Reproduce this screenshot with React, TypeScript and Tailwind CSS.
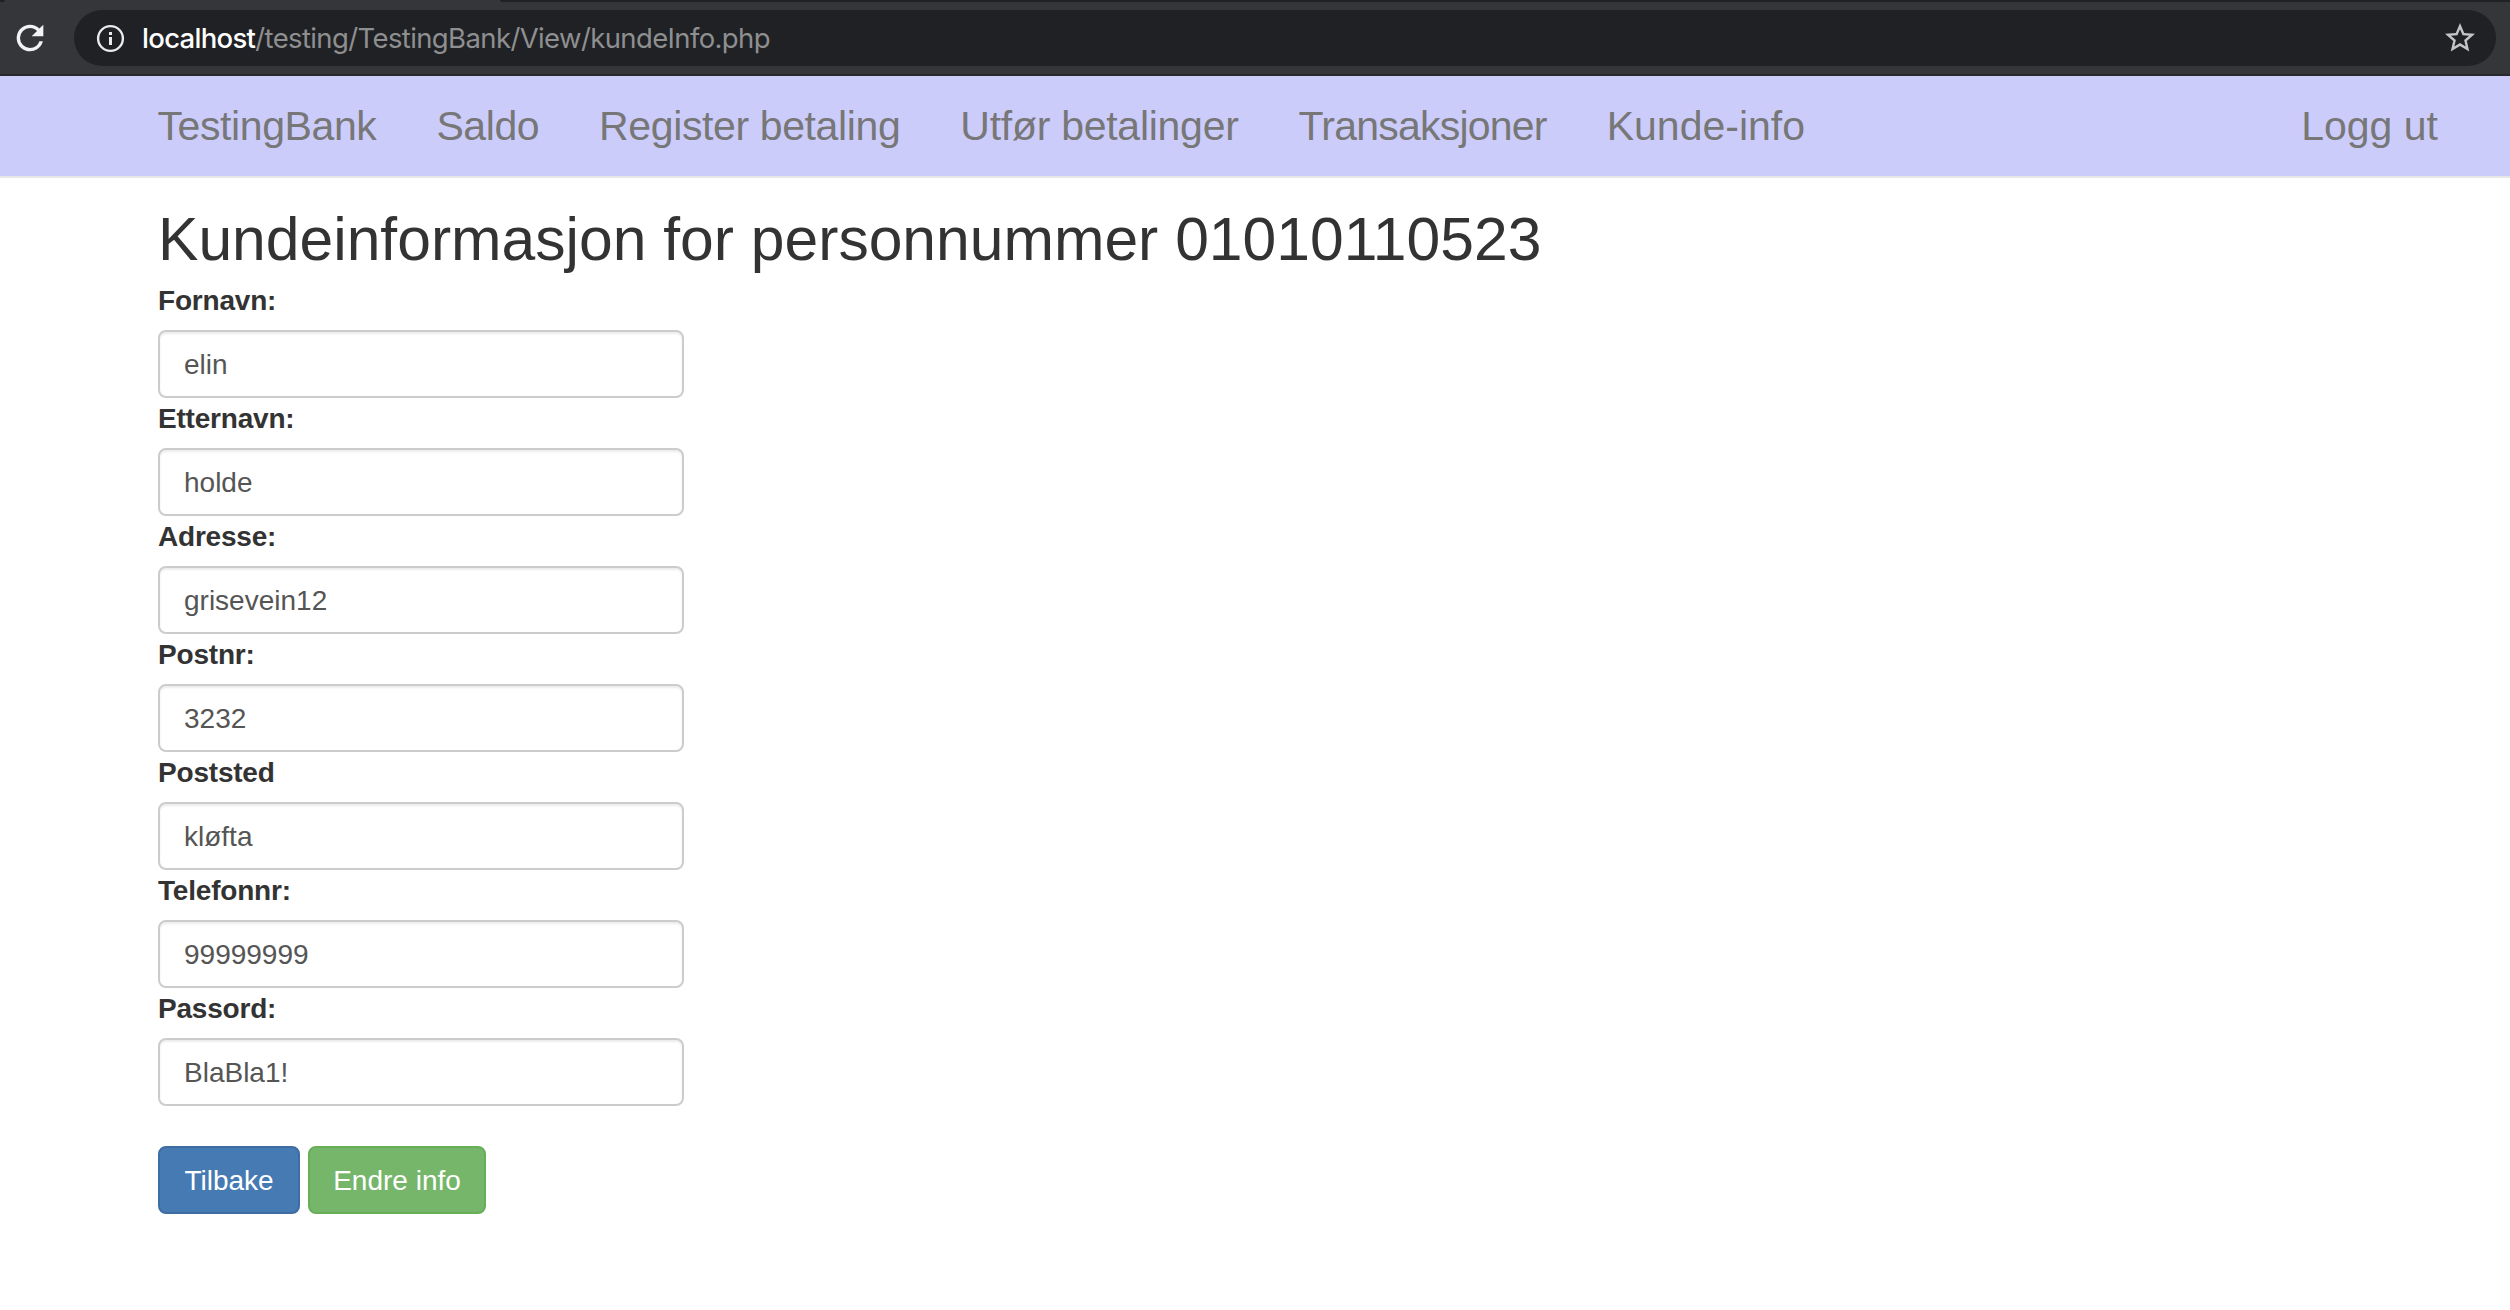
const links = [
  { text: "TestingBank", tracking: "tracking-[-0.4px]" },
  { text: "Saldo", tracking: "tracking-[-0.45px]" },
  { text: "Register betaling", tracking: "tracking-[-0.38px]" },
  { text: "Utfør betalinger", tracking: "tracking-[-0.27px]" },
  { text: "Transaksjoner", tracking: "tracking-[-0.78px]" },
  { text: "Kunde-info", tracking: "tracking-normal" },
];

const fields = [
  { label: "Fornavn:", value: "elin" },
  { label: "Etternavn:", value: "holde" },
  { label: "Adresse:", value: "grisevein12" },
  { label: "Postnr:", value: "3232" },
  { label: "Poststed", value: "kløfta" },
  { label: "Telefonnr:", value: "99999999" },
  { label: "Passord:", value: "BlaBla1!" },
];

function ReloadIcon() {
  return (
    <svg className="h-10 w-10" viewBox="0 0 24 24" fill="#f1f3f4">
      <path d="M17.65 6.35A7.958 7.958 0 0 0 12 4a8 8 0 1 0 7.73 10h-2.08A5.99 5.99 0 0 1 12 18a6 6 0 1 1 0-12c1.66 0 3.14.69 4.22 1.78L13 11h7V4l-2.35 2.35z" />
    </svg>
  );
}

function InfoIcon() {
  return (
    <svg className="h-8 w-8" viewBox="0 0 32 32" fill="none">
      <circle cx="16.5" cy="16.5" r="12.4" stroke="#e8eaed" strokeWidth="2.4" />
      <path d="M15 10h3v3h-3zM15 15h3v8h-3z" fill="#e8eaed" />
    </svg>
  );
}

function StarIcon() {
  return (
    <svg className="h-9 w-9" viewBox="0 0 24 24" fill="#c3c4c6">
      <path d="M22 9.24l-7.19-.62L12 2 9.19 8.63 2 9.24l5.46 4.73L5.82 21 12 17.27 18.18 21l-1.63-7.03L22 9.24zM12 15.4l-3.76 2.27 1-4.28-3.32-2.88 4.38-.38L12 6.1l1.71 4.04 4.38.38-3.32 2.88 1 4.28L12 15.4z" />
    </svg>
  );
}

export default function App() {
  return (
    <div className="flex h-[1310px] w-[2510px] flex-col overflow-hidden bg-white font-['Liberation_Sans',Arial,sans-serif] text-[28px] leading-10 text-[#333333]">
      <header className="flex h-[76px] shrink-0 flex-col border-b-2 border-[#28292c] bg-[#35363a]">
        <div className="flex h-[2px] shrink-0 justify-between">
          <div className="h-[2px] w-[5px] rounded-br-[2px] bg-[#202124]" />
          <div className="h-[2px] w-[2010px] rounded-bl-[4px] bg-[#202124]" />
        </div>
        <div className="mt-2 flex h-14 items-center pr-[14px]">
          <div className="flex w-[74px] shrink-0 pl-[10px]">
            <ReloadIcon />
          </div>
          <div className="flex h-14 flex-1 items-center rounded-full bg-[#202124] pr-[18px] pl-5">
            <InfoIcon />
            <div className="ml-4 flex-1 font-['Inter',sans-serif] text-[27.5px] leading-8 tracking-[-0.62px] whitespace-nowrap text-[#8e8f91]">
              <span className="font-medium tracking-[-0.7px] text-white">localhost</span>/testing/TestingBank/View/kundeInfo.php
            </div>
            <StarIcon />
          </div>
        </div>
      </header>

      <nav className="flex h-[102px] shrink-0 items-center border-b-2 border-[#e7e7e7] bg-[#ccccfb] pr-[72px] pl-[157.5px] text-[41px] whitespace-nowrap text-[#777777]">
        <div className="flex flex-1 gap-[60px]">
          {links.map((l) => (
            <a key={l.text} className={l.tracking}>{l.text}</a>
          ))}
        </div>
        <a>Logg ut</a>
      </nav>

      <main className="flex flex-col items-start pt-[28px] pl-[158px]">
        <h2 className="mb-[8px] text-[60.6px] leading-[66px] whitespace-nowrap">
          Kundeinformasjon for personnummer 01010110523
        </h2>
        {fields.map((f) => (
          <div key={f.label} className="flex w-[526px] flex-col">
            <label className="mb-[8px] leading-[42px] font-bold tracking-[-0.2px]">{f.label}</label>
            <input
              className="h-[68px] rounded-lg border-2 border-[#cccccc] bg-white px-6 pt-[2px] text-[#555555] shadow-[inset_0_2px_2px_rgba(0,0,0,0.075)]"
              defaultValue={f.value}
            />
          </div>
        ))}
        <div className="mt-10 flex gap-2 text-white">
          <button className="h-[68px] w-[142px] rounded-lg border-2 border-[#3d6da3] bg-[#467ab3] pt-[2px] whitespace-nowrap">Tilbake</button>
          <button className="h-[68px] w-[178px] rounded-lg border-2 border-[#67ae59] bg-[#75b66a] pt-[2px] whitespace-nowrap">Endre info</button>
        </div>
      </main>
    </div>
  );
}
